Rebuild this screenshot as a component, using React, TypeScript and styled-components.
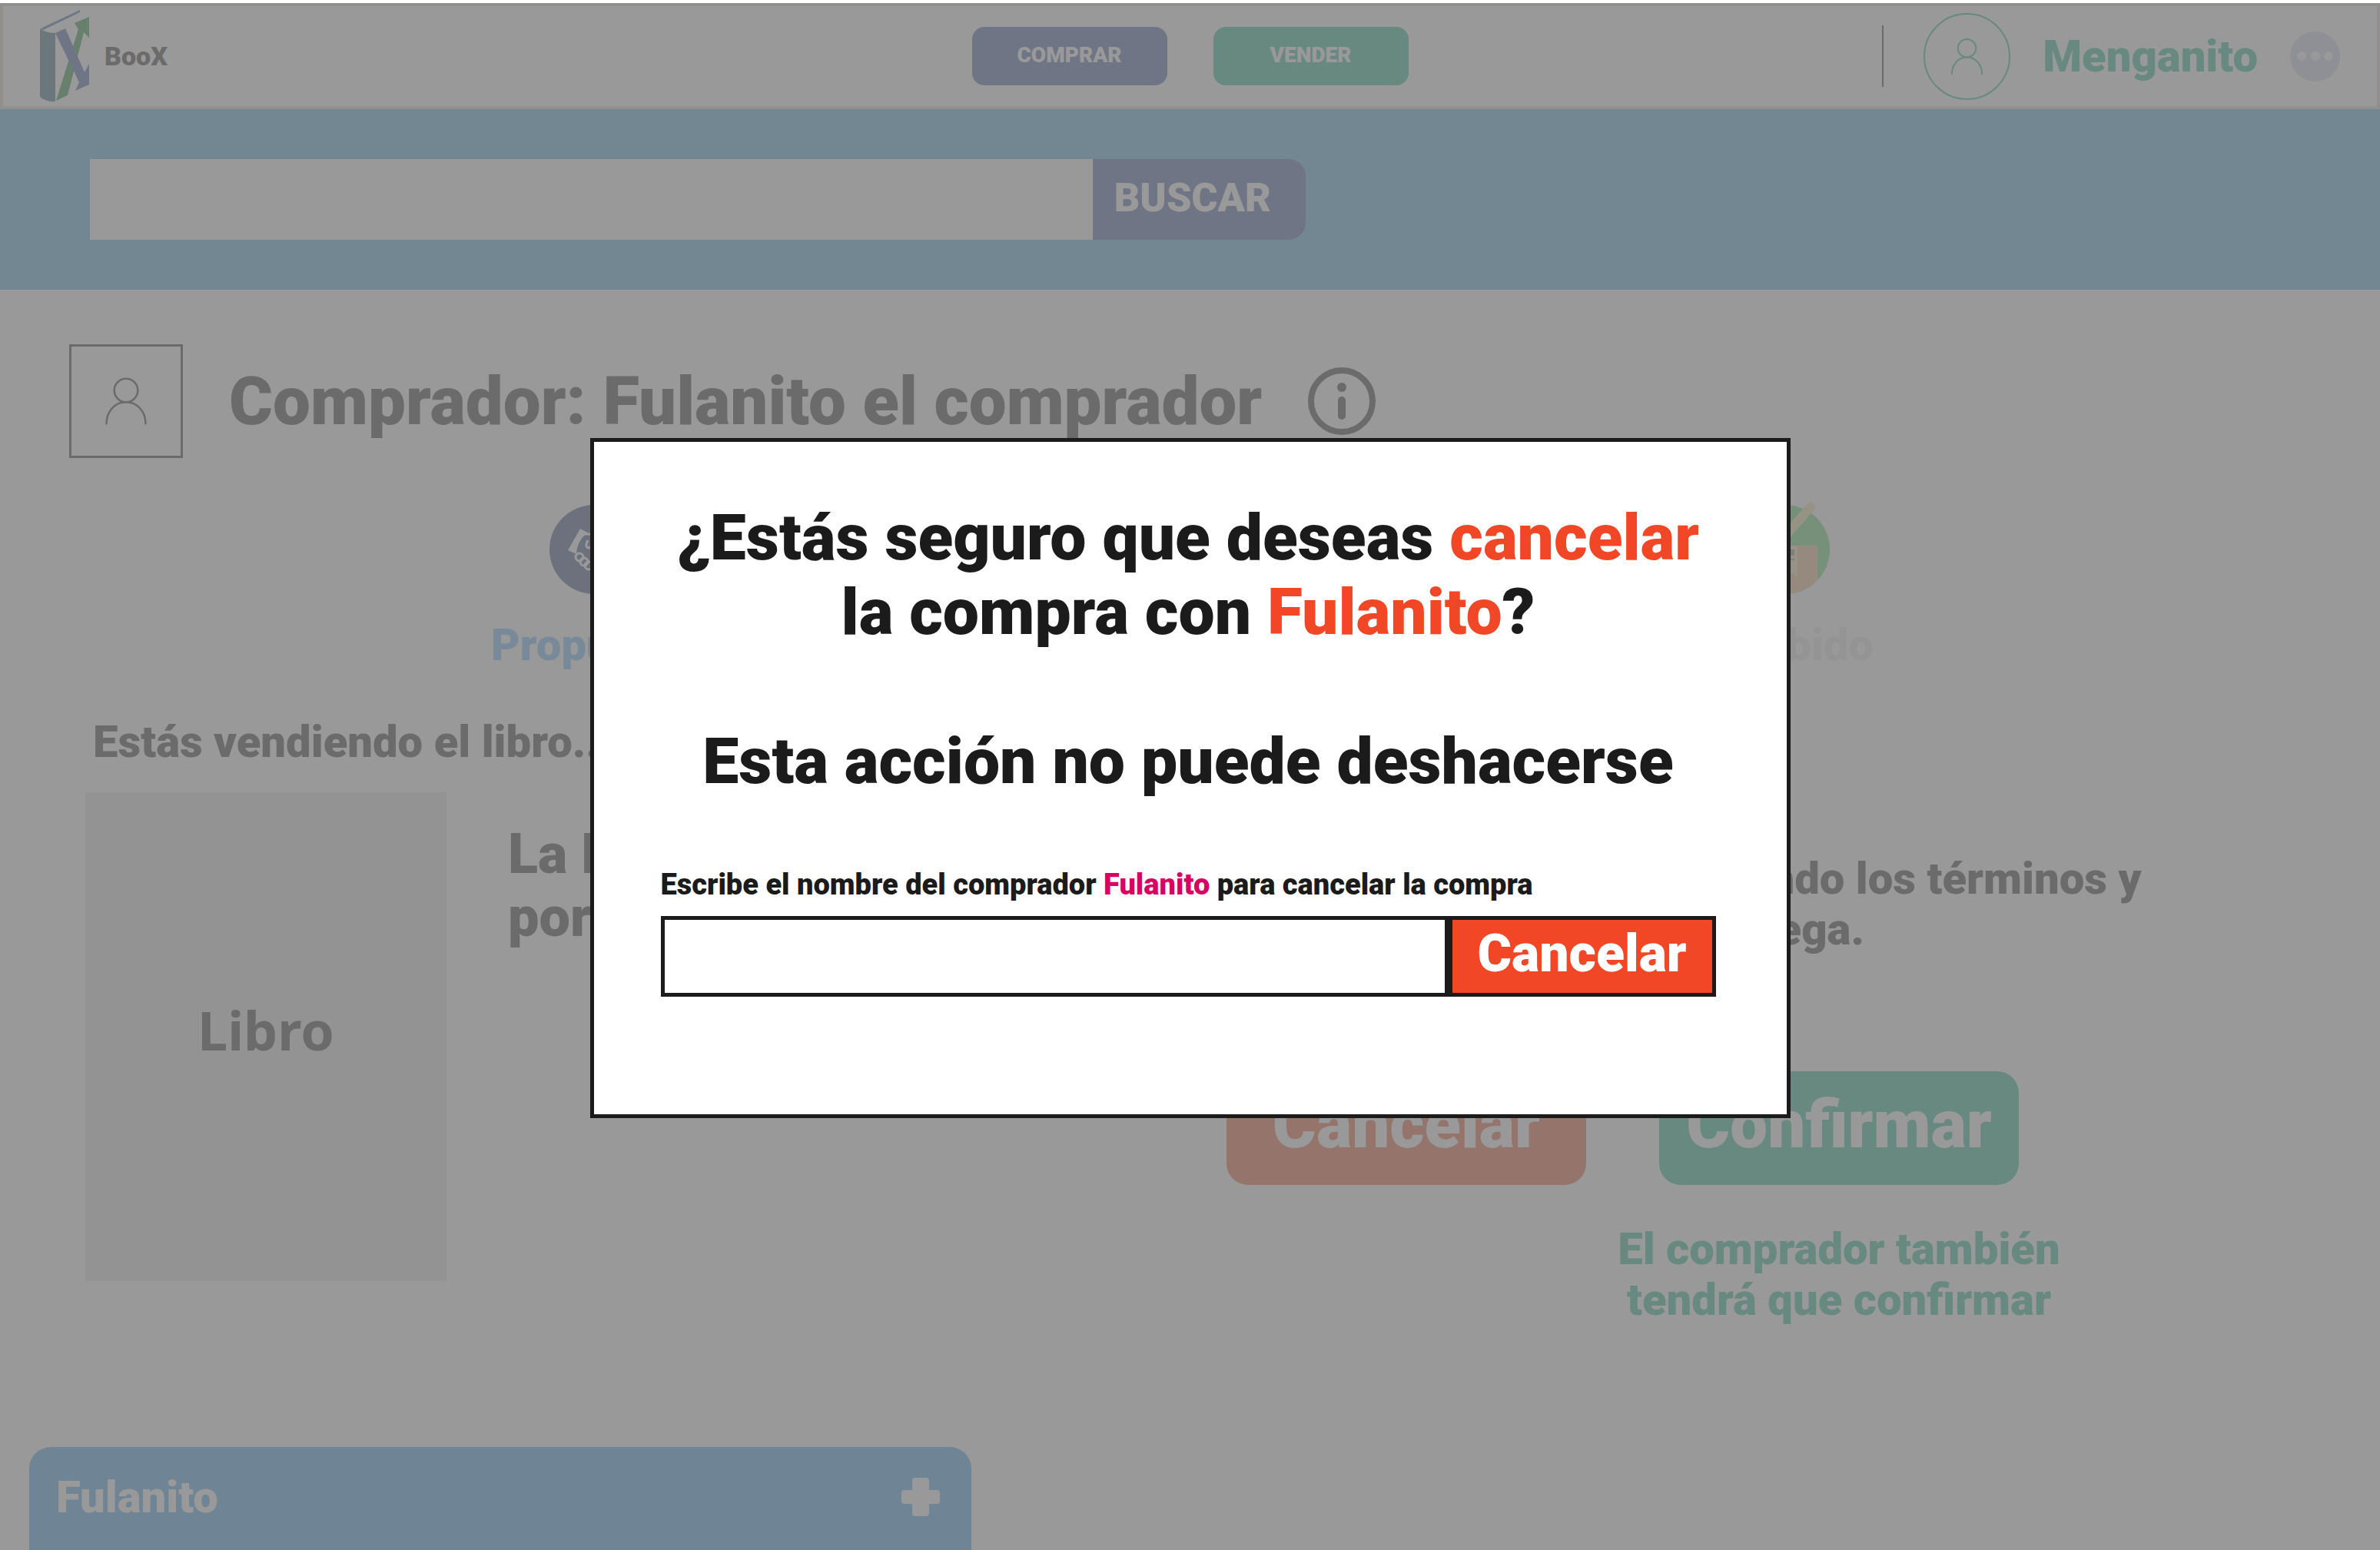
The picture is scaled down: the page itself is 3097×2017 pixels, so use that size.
import React from 'react';
import styled, { createGlobalStyle } from 'styled-components';

const color = {
  ink: '#1b1b1b',
  text: '#b2b2b2',
  blue: '#c0e1f5',
  sky: '#b9dcf7',
  skyText: '#c8e6ff',
  indigo: '#bbc3de',
  navy: '#b6bcd2',
  green: '#ade4d4',
  coral: '#f8c1b4',
  pale: '#f5f5f5',
  danger: '#f24726',
  magenta: '#da0063',
};

const GlobalStyle = createGlobalStyle`
  *, *::before, *::after { box-sizing: border-box; }
  body { margin: 0; background: #fff; }
  body, button, input { font-family: Roboto, 'Open Sans', sans-serif; font-weight: 900; }
  h1, h2, p { margin: 0; font-weight: 900; }
  button { border: 0; padding: 0; cursor: pointer; }
  svg { display: block; }
`;

const Page = styled.div`
  position: relative;
  display: flex;
  flex-direction: column;
  min-height: 100vh;
  padding-top: 4px;
  overflow: hidden;
  color: ${color.text};
`;

const Header = styled.header`
  display: grid;
  grid-template-columns: 1fr auto 1fr;
  align-items: center;
  height: 138px;
  padding: 0 48px;
  border: 4px solid #f5efef;
`;

const Brand = styled.a`
  display: flex;
  align-items: center;
  gap: 19px;
  color: inherit;
  font-size: 34px;
  line-height: 40px;
  text-decoration: none;
`;

const Nav = styled.nav`
  display: flex;
  gap: 60px;
`;

const NavButton = styled.button<{ $tone: string }>`
  width: 254px;
  height: 76px;
  padding-bottom: 4px;
  border-radius: 16px;
  background: ${(p) => p.$tone};
  color: #fff;
  font-size: 28px;
`;

const Account = styled.div`
  display: flex;
  align-items: center;
  justify-content: flex-end;
  color: ${color.green};
  font-size: 58px;
  line-height: 66px;
`;

const Divider = styled.span`
  width: 2px;
  height: 80px;
  margin-right: 52px;
  background: ${color.text};
`;

const Avatar = styled.span<{ $round?: boolean }>`
  display: grid;
  place-items: center;
  flex: none;
  width: ${(p) => (p.$round ? 113 : 148)}px;
  height: ${(p) => (p.$round ? 113 : 148)}px;
  border: ${(p) => (p.$round ? 2 : 3)}px solid;
  border-radius: ${(p) => (p.$round ? '50%' : 0)};
`;

const UserName = styled.span`
  margin: 0 42px;
`;

const MoreButton = styled.button`
  width: 65px;
  height: 65px;
  border-radius: 50%;
  background: #eef1f8;
`;

const SearchBand = styled.form`
  display: flex;
  height: 235px;
  padding: 65px calc(45% + 4px) 65px 117px;
  background: ${color.blue};
`;

const SearchInput = styled.input`
  flex: 1;
  min-width: 0;
  border: 0;
  background: #fff;
  font-size: 52px;
`;

const SearchButton = styled.button`
  width: 277px;
  padding: 0 45px 4px 27px;
  border-radius: 0 22px 22px 0;
  background: ${color.indigo};
  color: #fff;
  font-size: 52px;
`;

const Main = styled.main`
  padding: 71px 111px 0;
`;

const BuyerRow = styled.div`
  display: flex;
  align-items: center;
  gap: 60px;
  margin-left: -21px;
`;

const BuyerName = styled.h1`
  font-size: 87px;
  line-height: 100px;
`;

const InfoButton = styled.button`
  background: none;
  color: inherit;
`;

const Steps = styled.ol`
  display: flex;
  justify-content: space-between;
  width: 1790px;
  max-width: 100%;
  margin: 61px auto 0;
  padding: 0;
  list-style: none;
`;

const Step = styled.li<{ $tone: string }>`
  display: flex;
  flex-direction: column;
  align-items: center;
  gap: 32px;
  width: 240px;
  color: ${(p) => p.$tone};
  font-size: 58px;
  line-height: 66px;
`;

const SectionTitle = styled.h2`
  margin: 60px 0 33px;
  padding-left: 10px;
  font-size: 58px;
  line-height: 66px;
`;

const Deal = styled.section`
  display: grid;
  grid-template-columns: 470px 3fr 8fr;
  align-items: start;
`;

const Cover = styled.div`
  display: grid;
  place-items: center;
  height: 636px;
  padding-bottom: 18px;
  background: ${color.pale};
  font-family: 'Noto Sans', sans-serif;
  font-size: 70px;
  font-weight: 700;
`;

const BookTitle = styled.p`
  padding: 40px 0 0 80px;
  font-size: 72px;
  line-height: 82px;
  white-space: nowrap;
`;

const Negotiation = styled.div`
  display: flex;
  flex-direction: column;
  align-items: center;
  gap: 152px;
  padding-top: 79px;
`;

const Note = styled.p<{ $tone?: string }>`
  color: ${(p) => p.$tone ?? 'inherit'};
  font-size: 58px;
  line-height: 66px;
  text-align: center;
  white-space: nowrap;
`;

const Actions = styled.div`
  display: flex;
  gap: 95px;
`;

const Action = styled.div`
  display: flex;
  flex-direction: column;
  align-items: center;
  gap: 50px;
  width: 468px;
`;

const ActionButton = styled.button<{ $tone: string }>`
  width: 100%;
  height: 148px;
  padding-bottom: 10px;
  border-radius: 28px;
  background: ${(p) => p.$tone};
  color: #fff;
  font-size: 87px;
`;

const Chat = styled.button`
  display: flex;
  justify-content: space-between;
  align-items: center;
  width: 1226px;
  height: 134px;
  margin: auto 0 0 38px;
  padding: 0 41px 4px 35px;
  border-radius: 28px 28px 0 0;
  background: ${color.sky};
  color: #fff;
  font-size: 58px;
`;

const Overlay = styled.div`
  position: absolute;
  inset: 4px 0 0;
  display: flex;
  align-items: center;
  justify-content: center;
  padding-top: 4px;
  background: rgba(0, 0, 0, 0.4);
`;

const Dialog = styled.section`
  width: 1562px;
  padding: 76px 92px 153px 87px;
  border: 5px solid ${color.ink};
  background: #fff;
  color: ${color.ink};
`;

const DialogText = styled.h2`
  margin-bottom: 97px;
  font-size: 84px;
  line-height: 97px;
  text-align: center;
  white-space: nowrap;
`;

const Warning = styled(DialogText).attrs({ as: 'p' })`
  margin-bottom: 90px;
`;

const Accent = styled.span<{ $tone: string }>`
  color: ${(p) => p.$tone};
`;

const ConfirmLabel = styled.label`
  display: block;
  margin-bottom: 19px;
  font-size: 38px;
  line-height: 44px;
`;

const ConfirmForm = styled.form`
  display: flex;
  height: 105px;
`;

const ConfirmInput = styled.input`
  flex: 1;
  min-width: 0;
  border: 5px solid ${color.ink};
  border-radius: 0;
  background: #fff;
  font-size: 52px;
`;

const ConfirmButton = styled.button`
  width: 348px;
  padding-bottom: 8px;
  border: 5px solid ${color.ink};
  background: ${color.danger};
  color: #fff;
  font-size: 68px;
`;

const Logo = () => (
  <svg width="65" height="120" viewBox="0 0 65 120" aria-hidden="true">
    <path d="M1 24 52 0v3L4 26Z" fill="#bbc3de" />
    <path d="M0 24q8 6 20 6v89q-12 1-20-6Z" fill="#b2c6d0" />
    <path d="M21 118 50 25l-5-8 19-8v27l-7-7L36 111Z" fill="#aed4b8" />
    <path d="M20 30l13-6 25 57 6-11v27l-18 8 5-11Z" fill="#bbc3de" />
  </svg>
);

const Person = ({ width, height }: { width: number; height: number }) => (
  <svg width={width} height={height} viewBox="0 0 44 48" fill="none" stroke="currentColor" strokeWidth="2" strokeLinecap="round" aria-hidden="true">
    <circle cx="22" cy="13" r="12" />
    <path d="M2 47C2 34 11 25 22 25s20 9 20 22" />
  </svg>
);

const Dots = () => (
  <svg width="65" height="65" viewBox="0 0 65 65" fill="#fff" aria-hidden="true">
    <circle cx="15" cy="32" r="6" />
    <circle cx="33" cy="32" r="6" />
    <circle cx="50" cy="32" r="6" />
  </svg>
);

const Info = () => (
  <svg width="88" height="88" viewBox="0 0 88 88" fill="none" stroke="currentColor" aria-hidden="true">
    <circle cx="44" cy="44" r="40" strokeWidth="8" />
    <circle cx="44" cy="26" r="6" fill="currentColor" stroke="none" />
    <path d="M44 43v20" strokeWidth="10" strokeLinecap="round" />
  </svg>
);

const Handshake = () => (
  <svg width="117" height="117" viewBox="0 0 117 117" aria-hidden="true">
    <circle cx="58" cy="58" r="58" fill={color.navy} />
    <path d="M40 31 50 36Q36 46 35 64L24 59Z" fill="#fff" />
    <path d="M77 31 67 36Q81 46 82 64L93 59Z" fill="#fff" />
    <g fill="none" stroke="#fff" strokeWidth="3">
      <path d="M46 38h22M50 46q-5 10 2 10l10-7 16 14" />
      <circle cx="39" cy="68" r="5" />
      <circle cx="45" cy="74" r="5" />
      <circle cx="51" cy="79" r="5" />
    </g>
  </svg>
);

const Package = () => (
  <svg width="117" height="117" viewBox="0 0 117 117" overflow="visible" aria-hidden="true">
    <defs>
      <clipPath id="disc"><circle cx="58" cy="58" r="58" /></clipPath>
    </defs>
    <circle cx="58" cy="58" r="58" fill="#c6f0cb" />
    <path d="M16 53h84v64H16Z" fill="#f8e6d0" clipPath="url(#disc)" />
    <path d="M46 53h28v41l-7-5-7 5-7-5-7 5Z" fill="#faf5df" />
    <path d="M54 58h16v8H54ZM54 70h16v2H54Z" fill="#d2d2d2" />
    <path d="M60 38 91 3" stroke="#faf5dc" strokeWidth="12" strokeLinecap="round" />
  </svg>
);

const Plus = () => (
  <svg width="50" height="50" viewBox="0 0 50 50" fill="#fff" aria-hidden="true">
    <rect x="14" width="22" height="50" rx="4" />
    <rect y="16" width="50" height="18" rx="4" />
  </svg>
);

export default function App() {
  return (
    <>
      <GlobalStyle />
      <Page>
        <Header>
          <Brand href="#"><Logo />BooX</Brand>
          <Nav>
            <NavButton $tone={color.indigo}>COMPRAR</NavButton>
            <NavButton $tone={color.green}>VENDER</NavButton>
          </Nav>
          <Account>
            <Divider />
            <Avatar $round><Person width={43} height={47} /></Avatar>
            <UserName>Menganito</UserName>
            <MoreButton aria-label="Más opciones"><Dots /></MoreButton>
          </Account>
        </Header>

        <SearchBand onSubmit={(e) => e.preventDefault()}>
          <SearchInput type="search" aria-label="Buscar libros" />
          <SearchButton>BUSCAR</SearchButton>
        </SearchBand>

        <Main>
          <BuyerRow>
            <Avatar><Person width={56} height={62} /></Avatar>
            <BuyerName>Comprador: Fulanito el comprador</BuyerName>
            <InfoButton aria-label="Información del comprador"><Info /></InfoButton>
          </BuyerRow>

          <Steps>
            <Step $tone={color.skyText}><Handshake />Propuesta</Step>
            <Step $tone="#f7f7f7"><Package />Recibido</Step>
          </Steps>

          <SectionTitle>Estás vendiendo el libro...</SectionTitle>

          <Deal>
            <Cover>Libro</Cover>
            <BookTitle>La Historia<br />por Fulanito</BookTitle>
            <Negotiation>
              <Note>Fulanito y tú están ahora negociando los términos y<br />condiciones de entrega.</Note>
              <Actions>
                <Action>
                  <ActionButton $tone={color.coral}>Cancelar</ActionButton>
                </Action>
                <Action>
                  <ActionButton $tone={color.green}>Confirmar</ActionButton>
                  <Note $tone={color.green}>El comprador también<br />tendrá que confirmar</Note>
                </Action>
              </Actions>
            </Negotiation>
          </Deal>
        </Main>

        <Chat>Fulanito<Plus /></Chat>

        <Overlay>
          <Dialog role="dialog" aria-modal="true" aria-labelledby="cancel-title">
            <DialogText id="cancel-title">
              ¿Estás seguro que deseas <Accent $tone={color.danger}>cancelar</Accent><br />
              la compra con <Accent $tone={color.danger}>Fulanito</Accent>?
            </DialogText>
            <Warning>Esta acción no puede deshacerse</Warning>
            <ConfirmLabel htmlFor="buyer-name">
              Escribe el nombre del comprador <Accent $tone={color.magenta}>Fulanito</Accent> para cancelar la compra
            </ConfirmLabel>
            <ConfirmForm onSubmit={(e) => e.preventDefault()}>
              <ConfirmInput id="buyer-name" type="text" />
              <ConfirmButton>Cancelar</ConfirmButton>
            </ConfirmForm>
          </Dialog>
        </Overlay>
      </Page>
    </>
  );
}
